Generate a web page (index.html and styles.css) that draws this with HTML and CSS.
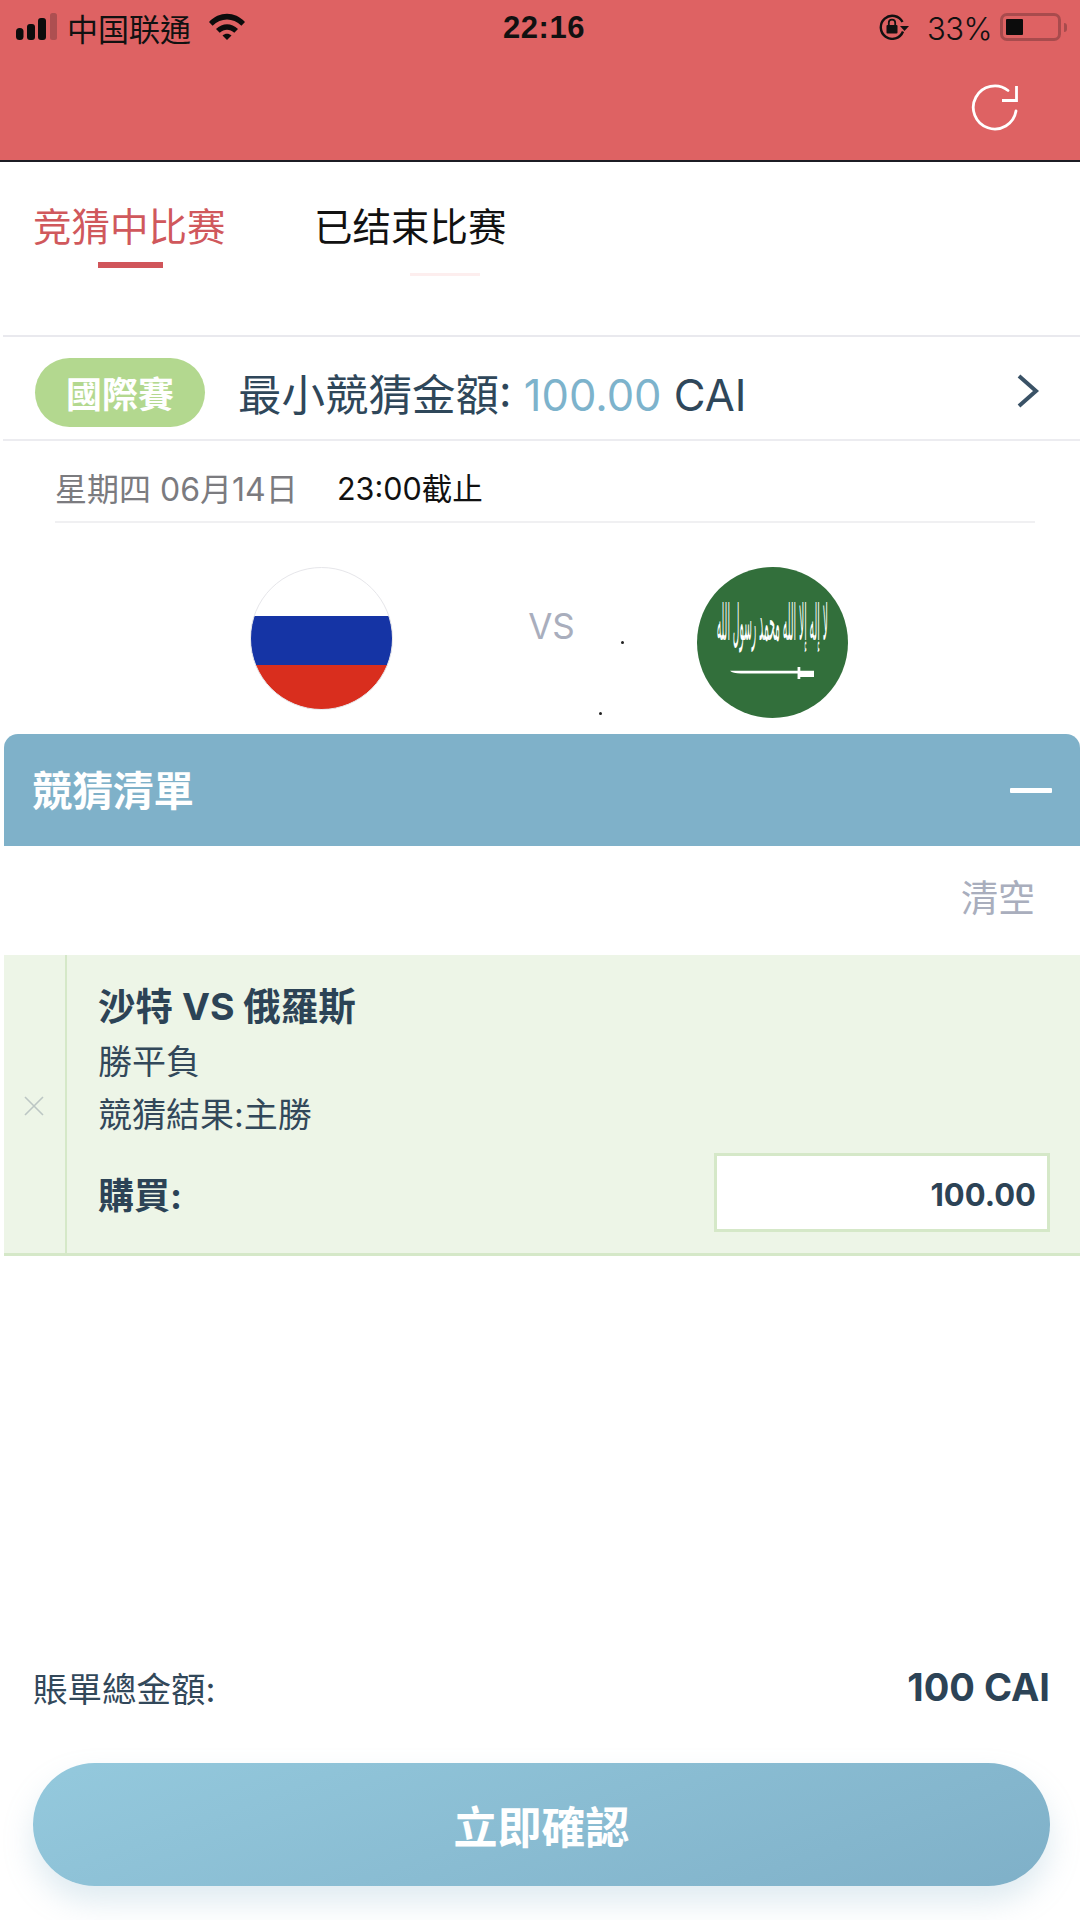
FILE: index.html
```html
<!DOCTYPE html>
<html lang="zh-Hant">
<head>
<meta charset="utf-8">
<title>競猜清單</title>
<link rel="stylesheet" href="styles.css">
</head>
<body>
<div class="page">
  <header class="app-header">
    <div class="status">
      <div class="status-left">
        <svg class="signal" viewBox="0 0 41 27"><rect x="0" y="15" width="7.5" height="12" rx="3.5"/><rect x="11" y="11" width="8" height="16" rx="3"/><rect x="22" y="5" width="8" height="22" rx="3"/><rect class="dim" x="34" y="0" width="7" height="27" rx="2.5"/></svg>
        <span class="carrier">中国联通</span>
        <svg class="wifi" viewBox="0 0 36 27"><path d="M0 9C10-2 26-2 36 9l-3.6 3.8C24 4.500 12 4.500 3.600 12.800z"/><path d="M7 16c6.500-6.300 15.500-6.300 22 0l-3.700 3.700c-4.500-4-10.100-4-14.600 0z"/><path d="M13.500 22.500c2.800-2.400 6.200-2.400 9 0L18 27z"/></svg>
      </div>
      <div class="time">22:16</div>
      <div class="status-right">
        <svg class="rotlock" viewBox="0 0 30 26"><path d="M24 17.500A11.500 11.500 0 1 1 23.500 8" fill="none" stroke="#111" stroke-width="2.400"/><path d="M21 12h9l-4.500 5z" fill="#111"/><rect x="7.500" y="11" width="11" height="8.500" rx="1" fill="#111"/><path d="M9.800 11V8.800a3.200 3.200 0 0 1 6.400 0V11" fill="none" stroke="#111" stroke-width="1.800"/></svg>
        <span class="percent">33%</span>
        <div class="battery"><div class="battery-fill"></div></div>
        <div class="battery-nub"></div>
      </div>
    </div>
    <div class="toolbar">
      <svg class="refresh" viewBox="0 0 48 48"><path d="M45 27A21.500 21.500 0 1 1 37 6.500" fill="none" stroke="#fff" stroke-width="2.800" stroke-linecap="round"/><path d="M45.500 2v14.500H31" fill="none" stroke="#fff" stroke-width="2.800"/></svg>
    </div>
  </header>

  <nav class="tabs">
    <div class="tab tab-active" lang="zh-Hans">竞猜中比赛<span class="tab-bar"></span></div>
    <div class="tab" lang="zh-Hans">已结束比赛<span class="tab-bar tab-bar-faint"></span></div>
  </nav>

  <section class="league">
    <span class="badge">國際賽</span>
    <span class="min-bet">最小競猜金額: <span class="amount">100.00</span> CAI</span>
    <svg class="chevron" viewBox="0 0 24 34"><path d="M3 2l17 15L3 32" fill="none" stroke="#3a5266" stroke-width="4"/></svg>
  </section>

  <div class="date-row">
    <span class="date">星期四 06月14日</span>
    <span class="deadline">23:00截止</span>
  </div>

  <section class="match">
    <div class="flag flag-ru"></div>
    <div class="vs">VS</div>
    <div class="flag flag-sa">
      <span class="shahada" lang="ar" dir="rtl">لا إله إلا الله محمد رسول الله</span>
      <svg class="sword" viewBox="0 0 92 14"><path d="M0 5h74V1h3v4h15v7H77v2h-3V8H12C6 8 2 7 0 5z" fill="#fff"/></svg>
    </div>
    <span class="speck speck-a"></span>
    <span class="speck speck-b"></span>
  </section>

  <section class="slip">
    <div class="slip-head">
      <span class="slip-title">競猜清單</span>
      <span class="collapse"></span>
    </div>
    <div class="slip-tools"><span class="clear">清空</span></div>
    <div class="bet">
      <div class="bet-remove"><svg class="close" viewBox="0 0 20 20"><path d="M1 1l18 18M19 1L1 19" stroke="#bcc6c4" stroke-width="1.600" fill="none"/></svg></div>
      <div class="bet-body">
        <div class="bet-title">沙特 VS 俄羅斯</div>
        <div class="bet-line bet-line-first">勝平負</div>
        <div class="bet-line">競猜結果:主勝</div>
        <div class="buy-row">
          <span class="buy-label">購買:</span>
          <div class="buy-input">100.00</div>
        </div>
      </div>
    </div>
  </section>

  <footer class="summary">
    <div class="total-row">
      <span class="total-label">賬單總金額:</span>
      <span class="total-value">100 CAI</span>
    </div>
    <button class="confirm">立即確認</button>
  </footer>
</div>
</body>
</html>
```
FILE: styles.css
```css
* { box-sizing: border-box; }
html, body { margin: 0; padding: 0; background: #fff; }
body { font-family: Inter, "Noto Sans CJK TC", sans-serif; color: #2c4356; }
.page { width: 1080px; height: 1920px; overflow: hidden; position: relative; display: flex; flex-direction: column; }

.app-header { height: 162px; background: #de6263; border-bottom: 2px solid #1c1c24; flex: none; }
.status { height: 56px; padding: 0 13px 0 16px; display: grid; grid-template-columns: 1fr auto 1fr; align-items: center; color: #111; }
.status-left, .status-right { display: flex; align-items: center; }
.status-right { justify-content: flex-end; position: relative; }
.signal { width: 41px; height: 27px; fill: #0c0c0c; margin-top: -3px; }
.signal .dim { fill: #ad4f51; }
.carrier { font-family: "Noto Sans CJK SC", sans-serif; font-size: 31px; line-height: 40px; margin-left: 10px; width: 125px; white-space: nowrap; }
.wifi { width: 36px; height: 27px; fill: #0c0c0c; margin-left: 17px; margin-top: -3px; }
.time { font-family: "Liberation Sans", sans-serif; font-weight: 700; font-size: 31px; letter-spacing: 0.5px; margin-left: 5px; }
.rotlock { width: 30px; height: 26px; margin-top: -2px; }
.percent { font-family: Inter, sans-serif; font-weight: 300; font-size: 31px; margin-left: 18px; margin-right: 8px; letter-spacing: -0.5px; }
.battery { width: 61px; height: 28px; border: 3px solid #a84b4d; border-radius: 7px; padding: 3px; margin-top: -2px; }
.battery-fill { width: 17px; height: 100%; background: #0c0c0c; border-radius: 1px; }
.battery-nub { width: 3px; height: 9px; background: #a84b4d; border-radius: 0 3px 3px 0; margin: -2px 0 0 3px; }
.toolbar { height: 104px; display: flex; justify-content: flex-end; align-items: center; padding: 0 61px 0 0; }
.refresh { width: 48px; height: 48px; }

.tabs { height: 173px; padding: 38px 0 0 33px; display: flex; gap: 88px; flex: none; }
.tab { position: relative; width: 193px; height: 48px; font-family: "Noto Sans CJK SC", sans-serif; font-size: 38.5px; line-height: 48px; color: #111; white-space: nowrap; }
.tab-active { color: #d0585c; }
.tab-bar { position: absolute; left: 65px; top: 62px; width: 65px; height: 6px; background: #d0555a; }
.tab-bar-faint { left: 96px; top: 73px; width: 70px; height: 3px; background: #fdeeee; }

.league { height: 106px; margin-left: 3px; border-top: 2px solid #e9e9ee; border-bottom: 2px solid #ececf0; padding: 8px 0 0 32px; display: flex; align-items: center; flex: none; }
.badge { width: 170px; height: 69px; border-radius: 35px; background: #b3d88f; color: #fff; font-size: 36px; font-weight: 700; display: flex; align-items: center; justify-content: center; }
.min-bet { font-size: 43.5px; margin-left: 33px; color: #2f475a; white-space: nowrap; flex: 1; font-weight: 400; }
.amount { color: #7db3cc; font-weight: 400; }
.chevron { width: 24px; height: 34px; margin-right: 40px; margin-top: -2px; }

.date-row { margin: 0 45px 0 55px; height: 82px; padding-top: 11px; border-bottom: 2px solid #f0f0f2; display: flex; align-items: center; flex: none; }
.date { font-size: 32px; color: #7b7b7f; width: 282px; white-space: nowrap; }
.deadline { font-size: 30.5px; color: #111; white-space: nowrap; }

.match { height: 211px; position: relative; padding: 44px 232px 0 250px; display: flex; justify-content: space-between; align-items: flex-start; flex: none; }
.flag { border-radius: 50%; flex: none; }
.flag-ru { width: 143px; height: 143px; border: 1px solid #e6e6ea; background: linear-gradient(#fff 0 34%, #1534a5 34% 69%, #d92e1e 69%); }
.flag-sa { width: 151px; height: 151px; background: #326f3b; color: #fff; display: flex; flex-direction: column; align-items: center; }
.vs { font-size: 35px; color: #a9aebd; margin-top: 38px; margin-left: 13px; }
.shahada { font-family: "DejaVu Sans", sans-serif; font-size: 24px; font-weight: 400; line-height: 30px; margin-top: 41px; white-space: nowrap; transform: scale(0.38, 2.1); }
.sword { width: 84px; height: 13px; margin-top: 28px; }
.speck { position: absolute; width: 3px; height: 3px; border-radius: 50%; background: #222; }
.speck-a { left: 621px; top: 118px; }
.speck-b { left: 599px; top: 189px; }

.slip { margin-left: 4px; flex: none; }
.slip-head { height: 112px; background: #7fb1c9; border-radius: 14px 14px 0 0; padding: 0 28px 4px 28px; display: flex; align-items: center; justify-content: space-between; }
.slip-title { color: #fff; font-size: 40.5px; font-weight: 700; }
.collapse { width: 42px; height: 5px; background: #fff; border-radius: 1px; margin-top: 4px; }
.slip-tools { height: 109px; padding: 0 45px 9px 0; display: flex; align-items: center; justify-content: flex-end; }
.clear { font-size: 37px; color: #a9aebd; }
.bet { height: 301px; background: #edf5e7; border-bottom: 3px solid #d5e8c8; display: flex; }
.bet-remove { width: 63px; border-right: 2px solid #d5e8c8; display: flex; align-items: center; justify-content: center; padding: 4px 2px 0 0; flex: none; }
.close { width: 20px; height: 20px; }
.bet-body { flex: 1; padding: 29px 30px 0 31px; }
.bet-title { font-size: 37.5px; font-weight: 700; line-height: 46px; color: #2c4356; }
.bet-line { font-size: 34px; line-height: 46px; margin-top: 7px; color: #32485a; }
.bet-line-first { margin-top: 9px; }
.buy-row { display: flex; justify-content: space-between; align-items: center; margin-top: 15px; }
.buy-label { font-size: 36px; font-weight: 700; color: #2c4356; }
.buy-input { width: 336px; height: 79px; background: #fff; border: 3px solid #d5e8c8; display: flex; align-items: center; justify-content: flex-end; padding: 3px 11px 0 0; font-size: 31px; font-weight: 700; color: #2c4356; }

.summary { margin-top: auto; padding: 0 30px 34px 33px; flex: none; }
.total-row { display: flex; justify-content: space-between; align-items: center; height: 50px; margin-bottom: 51px; }
.total-label { font-size: 34.5px; color: #32485a; }
.total-value { font-size: 38px; font-weight: 700; color: #2c4356; }
.confirm { display: block; width: 100%; height: 123px; border: 0; border-radius: 62px; background: linear-gradient(160deg, #94c9dd, #7fb0c8); color: #fff; font-family: inherit; font-size: 44px; font-weight: 700; box-shadow: 0 16px 30px rgba(127, 177, 201, 0.25); }
```
